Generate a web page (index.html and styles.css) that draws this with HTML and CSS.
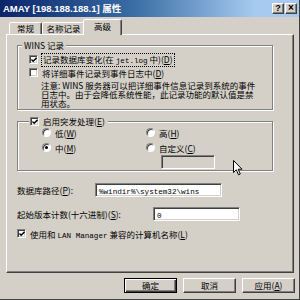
FILE: index.html
```html
<!DOCTYPE html>
<html>
<head>
<meta charset="utf-8">
<link rel="stylesheet" href="styles.css">
</head>
<body>
<div class="window">
  <div class="titlebar">
    <span class="title">AMAY [198.188.188.1] 属性</span>
    <div class="tbtns"><span class="tbtn">?</span><span class="tbtn x">×</span></div>
  </div>
  <div class="tabs">
    <div class="tab t1">常规</div>
    <div class="tab t2">名称记录</div>
    <div class="tab sel">高级</div>
  </div>
  <div class="panel">
    <div class="group g1">
      <div class="legend">WINS 记录</div>
      <div class="row"><span class="cb on"><svg viewBox="0 0 7 7"><path d="M0.5 3 L2.5 5 L6.5 1" /></svg></span><span class="focus">记录数据库变化(在 <span class="m">jet.log</span> 中)(<u>D</u>)</span></div>
      <div class="row"><span class="cb"></span><span>将详细事件记录到事件日志中(<u>D</u>)</span></div>
      <p class="note">注意: WINS 服务器可以把详细事件信息记录到系统的事件<br>日志中。由于会降低系统性能，此记录功能的默认值是禁<br>用状态。</p>
    </div>
    <div class="group g2">
      <div class="legend row"><span class="cb on"><svg viewBox="0 0 7 7"><path d="M0.5 3 L2.5 5 L6.5 1" /></svg></span><span>启用突发处理(<u>E</u>)</span></div>
      <div class="radios">
        <div class="row"><span class="rb"></span><span>低(<u>W</u>)</span></div>
        <div class="row"><span class="rb"></span><span>高(<u>H</u>)</span></div>
        <div class="row"><span class="rb on"></span><span>中(<u>M</u>)</span></div>
        <div class="custom">
          <div class="row"><span class="rb"></span><span>自定义(<u>C</u>)</span></div>
          <div class="input dis"></div>
        </div>
      </div>
    </div>
    <div class="field f1"><span class="lbl">数据库路径(<u>P</u>):</span><div class="input path"><span class="m">%windir%\system32\wins</span></div></div>
    <div class="field f2"><span class="lbl">起始版本计数(十六进制)(<u>S</u>):</span><div class="input ver"><span class="m">0</span></div></div>
    <div class="row lan"><span class="cb on"><svg viewBox="0 0 7 7"><path d="M0.5 3 L2.5 5 L6.5 1" /></svg></span><span>使用和 <span class="m">LAN Manager</span> 兼容的计算机名称(<u>L</u>)</span></div>
  </div>
  <div class="buttons">
    <div class="btn def">确定</div>
    <div class="btn">取消</div>
    <div class="btn">应用(<u>A</u>)</div>
  </div>
  <svg class="cursor" width="11" height="16" viewBox="0 0 11 16"><path d="M0.5 0.5 L0.5 12.5 L3.3 9.8 L5.5 14.8 L7.3 14 L5.2 9.2 L9 9.2 Z" fill="#fff" stroke="#000" stroke-width="1"/></svg>
</div>
</body>
</html>
```
FILE: styles.css
```css
html, body {
  margin: 0;
  padding: 0;
  background: #d4d0c8;
}
body {
  font-family: "Noto Sans CJK SC", "Liberation Sans", sans-serif;
  font-size: 8.5px;
  color: #000;
}
.window {
  width: 300px;
  height: 300px;
  box-sizing: border-box;
  border-right: 1px solid #404040;
  border-bottom: 1px solid #404040;
  display: flex;
  flex-direction: column;
  position: relative;
  overflow: hidden;
}
.titlebar {
  height: 17px;
  flex: none;
  background: linear-gradient(to right, #0a246a 0%, #3a6ea5 45%, #a6caf0 85%, #a6caf0 100%);
  display: flex;
  align-items: center;
  padding: 0 2px 0 3px;
}
.title {
  color: #fff;
  font-family: "Liberation Sans", "Noto Sans CJK SC", sans-serif;
  font-weight: bold;
  font-size: 9.5px;
  line-height: 12px;
}
.tbtns {
  margin-left: auto;
  display: flex;
  gap: 1px;
}
.tbtn {
  width: 12px;
  height: 11px;
  box-sizing: border-box;
  background: #d4d0c8;
  border: 1px solid;
  border-color: #fff #404040 #404040 #fff;
  box-shadow: inset -1px -1px #808080;
  font-family: "Liberation Sans", sans-serif;
  font-weight: bold;
  font-size: 9px;
  line-height: 9px;
  text-align: center;
}
.tbtn.x { font-size: 10px; line-height: 8px; }
.tabs {
  height: 18px;
  flex: none;
  display: flex;
  align-items: flex-end;
  padding-left: 9px;
  margin-bottom: -1px;
  position: relative;
  z-index: 1;
}
.tab {
  height: 12px;
  margin-bottom: 1px;
  box-sizing: border-box;
  background: #d4d0c8;
  border: 1px solid;
  border-bottom: none;
  border-color: #fff #404040 transparent #fff;
  box-shadow: inset -1px 0 #808080;
  border-radius: 2px 2px 0 0;
  text-align: center;
  line-height: 10px;
}
.t1 { width: 33px; }
.t2 { width: 43px; }
.tab.sel {
  width: 39px;
  height: 16px;
  margin: 0 -2px 0 -2px;
  line-height: 13px;
  position: relative;
}
.panel {
  margin-left: 6px;
  width: 288px;
  height: 239px;
  flex: none;
  box-sizing: border-box;
  border: 1px solid;
  border-color: #fff #404040 #404040 #fff;
  box-shadow: inset -1px -1px #808080;
  padding: 10px 0 0 10px;
  display: flex;
  flex-direction: column;
}
.group {
  position: relative;
  width: 256px;
  box-sizing: border-box;
  border: 1px solid #808080;
  box-shadow: inset 1px 1px #fff, 1px 1px #fff;
}
.legend {
  position: absolute;
  top: -6px;
  left: 4px;
  background: #d4d0c8;
  padding: 0 2px;
  line-height: 11px;
}
.g1 {
  height: 65px;
  padding: 7px 0 0 11px;
}
.g2 {
  height: 50px;
  margin-top: 11px;
  padding: 4px 0 0 24px;
}
.g2 .legend {
  left: 11px;
  top: -7px;
  height: 13px;
  padding: 0 3px 0 1px;
}
.row {
  display: flex;
  align-items: center;
  gap: 4px;
  height: 13px;
  white-space: nowrap;
}
.cb {
  width: 9px;
  height: 9px;
  box-sizing: border-box;
  background: #fff;
  border: 1px solid;
  border-color: #808080 #fff #fff #808080;
  box-shadow: inset 1px 1px #404040, inset -1px -1px #d4d0c8;
  display: flex;
  align-items: center;
  justify-content: center;
  flex: none;
}
.cb svg {
  width: 6px;
  height: 6px;
}
.cb path {
  fill: none;
  stroke: #000;
  stroke-width: 1.6;
}
.rb {
  width: 9px;
  height: 9px;
  box-sizing: border-box;
  border-radius: 50%;
  background: #fff;
  border: 1px solid;
  border-color: #808080 #fff #fff #808080;
  box-shadow: inset 1px 1px #404040;
  flex: none;
  position: relative;
}
.rb.on::after {
  content: "";
  position: absolute;
  left: 2px;
  top: 2px;
  width: 3px;
  height: 3px;
  border-radius: 50%;
  background: #000;
}
.focus {
  outline: 1px dotted #000;
  outline-offset: 0;
  padding: 0 1px;
  line-height: 10px;
}
.m {
  font-family: "Liberation Mono", monospace;
  font-size: 7.6px;
}
.note {
  margin: 2px 0 0 12px;
  line-height: 9px;
  white-space: nowrap;
}
.radios {
  display: grid;
  grid-template-columns: 104px 1fr;
  row-gap: 2px;
}
.custom {
  display: flex;
  flex-direction: column;
}
.input {
  height: 14px;
  box-sizing: border-box;
  background: #fff;
  border: 1px solid;
  border-color: #808080 #fff #fff #808080;
  box-shadow: inset 1px 1px #404040, inset -1px -1px #d4d0c8;
  padding-left: 3px;
  line-height: 12px;
  white-space: nowrap;
}
.input.dis {
  background: #d4d0c8;
  width: 54px;
  margin: 1px 0 0 15px;
}
.field {
  display: flex;
  align-items: center;
  height: 14px;
}
.f1 { margin-top: 12px; }
.f2 { margin-top: 10px; }
.lbl { white-space: nowrap; }
.path {
  margin-left: auto;
  margin-right: 71px;
  width: 127px;
}
.ver {
  margin-left: auto;
  margin-right: 53px;
  width: 87px;
}
.lan {
  margin-top: 6px;
}
.buttons {
  display: flex;
  justify-content: flex-end;
  gap: 6px;
  margin-top: 5px;
  padding-right: 4px;
}
.btn {
  width: 53px;
  height: 15px;
  box-sizing: border-box;
  border: 1px solid;
  border-color: #fff #404040 #404040 #fff;
  box-shadow: inset -1px -1px #808080;
  text-align: center;
  line-height: 12px;
}
.btn.def {
  border: 1px solid #000;
  box-shadow: inset 1px 1px #fff, inset -1px -1px #404040, inset -2px -2px #808080;
}
.cursor {
  position: absolute;
  left: 233px;
  top: 160px;
}
```
